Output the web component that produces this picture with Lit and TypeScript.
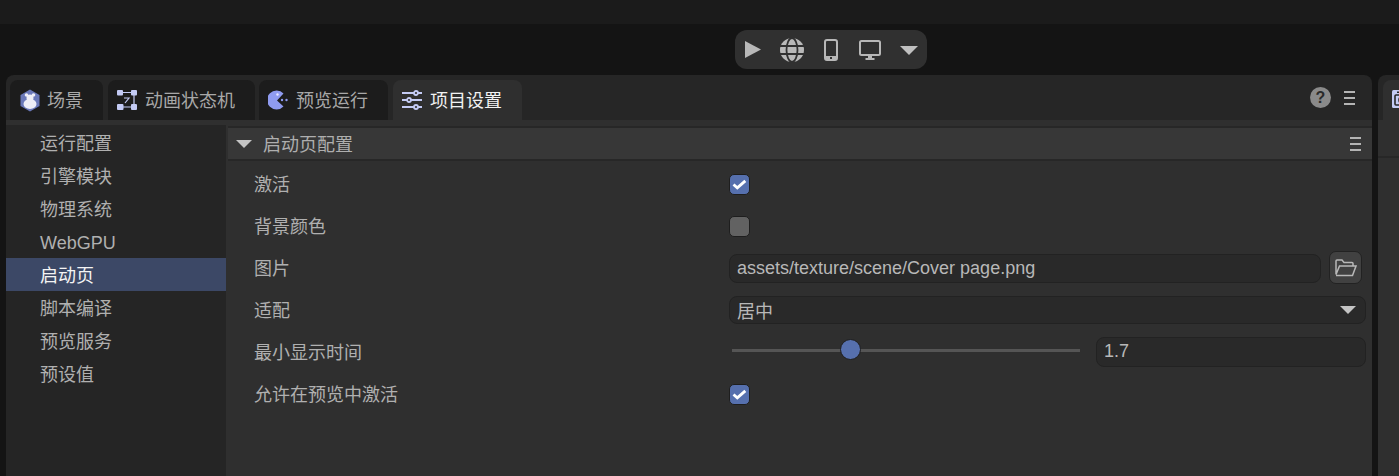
import { LitElement, html, css } from "lit";
import { customElement } from "lit/decorators.js";

const burger = html`<svg class="burger" width="11" height="14" viewBox="0 0 11 14"><path d="M0 1h11M0 7h11M0 13h11" stroke="#b4b4b4" stroke-width="2"/></svg>`;
const check = html`<svg width="19" height="19" viewBox="0 0 19 19"><path d="M3.500 9.500l3.800 3.400 8-7" fill="none" stroke="#fff" stroke-width="2.800"/></svg>`;
const caret = (w: number, h: number, c = "#c4c4c4") => html`<svg width="${w}" height="${h}" viewBox="0 0 ${w} ${h}"><path d="M0 0H${w}L${w / 2} ${h}Z" fill="${c}"/></svg>`;

const menu = ["运行配置", "引擎模块", "物理系统", "WebGPU", "启动页", "脚本编译", "预览服务", "预设值"];

@customElement("app-root")
export class AppRoot extends LitElement {
  static styles = css`
    :host { display: block; width: 1399px; height: 476px; overflow: hidden; background: #141414;
      font-family: "Liberation Sans", "Noto Sans CJK SC", sans-serif; font-size: 18px; color: #b4b4b4; }
    .topstrip { height: 24px; background: #1b1b1b; }
    .toolrow { height: 51px; display: flex; padding-left: 735px; box-sizing: border-box; padding-top: 6px; }
    .toolbar { width: 192px; height: 39px; border-radius: 12px; background: #303030; position: relative; }
    .toolbar svg { position: absolute; }
    .i-play { left: 10px; top: 11px; }
    .i-globe { left: 45px; top: 8px; }
    .i-phone { left: 89px; top: 9px; }
    .i-mon { left: 124px; top: 10px; }
    .i-caret { left: 165px; top: 16px; }
    .main { display: flex; gap: 6px; padding-left: 6px; height: 401px; }
    .panel { width: 1366px; background: #262626; border-radius: 8px 8px 0 0; display: flex; flex-direction: column; flex: none; }
    .tabs { height: 45px; box-sizing: border-box; padding: 5px 0 0 4px; display: flex; gap: 5px; align-items: stretch; position: relative; flex: none; }
    .tab { height: 40px; background: #1c1c1c; border-radius: 8px 8px 0 0; display: flex; align-items: center; box-sizing: border-box; color: #a8a8a8; padding-left: 9px; gap: 8px; flex: none; }
    .tab span { padding-bottom: 2px; }
    .tab.first { padding-left: 10px; gap: 7px; }
    .tab.snug { margin-left: -1px; }
    .tab.on { background: #2f2f2f; color: #f2f2f2; }
    .acts { position: absolute; right: 17px; top: 12px; display: flex; align-items: center; gap: 13px; }
    .help { width: 21px; height: 21px; border-radius: 50%; background: #8a8a8a; color: #2a2a2a; font-weight: 700; font-size: 16px; display: flex; align-items: center; justify-content: center; }
    .band { height: 5px; background: #2f2f2f; flex: none; }
    .body { flex: 1; display: flex; min-height: 0; }
    .side { width: 220px; flex: none; background: #252525; display: flex; flex-direction: column; padding-top: 1px; box-sizing: border-box; }
    .side div { height: 33px; line-height: 37px; padding-left: 34px; color: #b0b0b0; }
    .side div.on { background: #3c4866; color: #f4f4f4; }
    .content { flex: 1; background: #2f2f2f; padding: 1px 0 0 2px; box-sizing: border-box; }
    .hdr { height: 31px; background: #373737; border-top: 2px solid #272727; border-bottom: 2px solid #272727; display: flex; align-items: center; padding: 0 11px 0 8px; color: #aeaeae; }
    .hdr .t { margin-left: 11px; flex: 1; padding-bottom: 1px; }
    .rows { padding-top: 2px; }
    .row { height: 42px; display: flex; align-items: center; }
    .label { width: 501px; padding: 0 0 2px 26px; box-sizing: border-box; flex: none; color: #b0b0b0; }
    .cb { width: 21px; height: 21px; border-radius: 5px; border: 1px solid #1e1e1e; background: #5670ae; flex: none; display: flex; box-sizing: border-box; }
    .cb.off { background: #626262; }
    .field { height: 29px; border: 1px solid #222; background: #292929; border-radius: 8px; box-sizing: border-box; padding: 0 7px; display: flex; align-items: center; color: #b8b8b8; flex: none; }
    .f-img { width: 592px; }
    .f-sel { width: 637px; height: 28px; justify-content: space-between; padding-right: 9px; }
    .f-num { width: 270px; height: 30px; padding-bottom: 2px; }
    .fbtn { width: 33px; height: 33px; margin: 0 0 1px 8px; border: 1px solid #222; border-radius: 7px; background: #414141; display: flex; align-items: center; justify-content: center; box-sizing: border-box; }
    .slider { width: 348px; height: 3px; background: #555; position: relative; margin: 0 16px 3px 3px; flex: none; }
    .knob { position: absolute; left: 108px; top: -10px; width: 21px; height: 21px; border-radius: 50%; background: #5670ae; border: 1px solid #1e1e1e; box-sizing: border-box; }
    .right { flex: 1; background: #262626; border-radius: 8px 0 0 0; display: flex; flex-direction: column; min-width: 0; }
    .rtab { margin: 5px 0 0 5px; height: 40px; background: #2f2f2f; border-radius: 8px 0 0 0; padding: 10px 0 0 9px; box-sizing: border-box; overflow: hidden; flex: none; }
    .rbody { flex: 1; background: #2f2f2f; }
    .rline { height: 36px; border-bottom: 2px solid #272727; }
  `;

  render() {
    return html`
      <div class="topstrip"></div>
      <div class="toolrow">
        <div class="toolbar">
          <svg class="i-play" width="16" height="17" viewBox="0 0 16 17"><path d="M0 0L16 8.500L0 17Z" fill="#b8b8b8"/></svg>
          <svg class="i-globe" width="24" height="24" viewBox="0 0 24 24">
            <circle cx="12" cy="12" r="12" fill="#b8b8b8"/>
            <g fill="none" stroke="#303030" stroke-width="1.800"><path d="M0 8h24M0 16h24"/><ellipse cx="12" cy="12" rx="5.500" ry="12"/></g>
          </svg>
          <svg class="i-phone" width="14" height="22" viewBox="0 0 14 22">
            <rect x="1" y="1" width="12" height="20" rx="2" fill="none" stroke="#b8b8b8" stroke-width="2"/><path d="M1 17h12v3a1 1 0 0 1-1 1H2a1 1 0 0 1-1-1z" fill="#b8b8b8"/><rect x="6" y="18" width="2" height="2" fill="#303030"/>
          </svg>
          <svg class="i-mon" width="22" height="20" viewBox="0 0 22 20">
            <rect x="1" y="1" width="20" height="14" rx="1.500" fill="none" stroke="#b8b8b8" stroke-width="2"/><path d="M9 15h4v3h-4zM6.500 18h9v2h-9z" fill="#b8b8b8"/>
          </svg>
          <svg class="i-caret" width="18" height="9" viewBox="0 0 18 9"><path d="M0 0H18L9 9Z" fill="#c0c0c0"/></svg>
        </div>
      </div>
      <div class="main">
        <div class="panel">
          <div class="tabs">
            <div class="tab first" style="width:93px">
              <svg width="20" height="23" viewBox="0 0 20 23"><path d="M10 .5L19.500 6v11L10 22.500.5 17V6z" fill="#6a78b8"/><ellipse cx="10" cy="15" rx="6.500" ry="5" fill="#eeeef6"/><circle cx="10" cy="9" r="3.500" fill="#eeeef6"/><circle cx="6.500" cy="6" r="1.800" fill="#eeeef6"/><circle cx="13.500" cy="6" r="1.800" fill="#eeeef6"/></svg>
              <span>场景</span>
            </div>
            <div class="tab" style="width:147px">
              <svg width="20" height="20" viewBox="0 0 20 20"><g fill="#c4cbf5"><rect x="0" y="0" width="6" height="5.500" rx="1"/><rect x="14" y="0" width="6" height="5.500" rx="1"/><rect x="0" y="14" width="6.500" height="6" rx="1"/><rect x="14" y="14" width="6" height="6" rx="1"/></g><path d="M6 2.500h8M17 5v9M6 17h8M7 8h5l-4 5" fill="none" stroke="#c4cbf5" stroke-width="1.200"/></svg>
              <span>动画状态机</span>
            </div>
            <div class="tab snug" style="width:129px">
              <svg width="20" height="20" viewBox="0 0 20 20"><path d="M15.500 3.500A9.500 9.500 0 1 0 15.500 16.500L9 10.500Z" fill="#8f9bf0"/><circle cx="9.500" cy="4.500" r="1.200" fill="#e8e8ff"/><circle cx="14" cy="10" r="1.200" fill="#8f9bf0"/><circle cx="18.500" cy="10" r="1.200" fill="#8f9bf0"/></svg>
              <span>预览运行</span>
            </div>
            <div class="tab on" style="width:129px">
              <svg width="20" height="20" viewBox="0 0 20 20"><g fill="none" stroke="#c4cbf5" stroke-width="1.800"><path d="M0 3h12M16 3h4M0 10h5M9 10h11M0 17h12M16 17h4"/><circle cx="14" cy="3" r="2"/><circle cx="7" cy="10" r="2"/><circle cx="14" cy="17" r="2"/></g></svg>
              <span>项目设置</span>
            </div>
            <div class="acts"><span class="help">?</span>${burger}</div>
          </div>
          <div class="band"></div>
          <div class="body">
            <div class="side">${menu.map((m) => html`<div class=${m === "启动页" ? "on" : ""}>${m}</div>`)}</div>
            <div class="content">
              <div class="hdr">${caret(16, 8)}<span class="t">启动页配置</span>${burger}</div>
              <div class="rows">
                <div class="row"><span class="label">激活</span><span class="cb">${check}</span></div>
                <div class="row"><span class="label">背景颜色</span><span class="cb off"></span></div>
                <div class="row"><span class="label">图片</span><span class="field f-img">assets/texture/scene/Cover page.png</span>
                  <span class="fbtn"><svg width="22" height="18" viewBox="0 0 22 18"><path d="M1 15.500V2a1 1 0 0 1 1-1h5l2 2.500h8a1 1 0 0 1 1 1V7M1 15.500L4.500 7H21l-3.500 9.500H1" fill="none" stroke="#b8b8b8" stroke-width="1.500"/></svg></span></div>
                <div class="row"><span class="label">适配</span><span class="field f-sel">居中 ${caret(16, 8)}</span></div>
                <div class="row"><span class="label">最小显示时间</span><span class="slider"><span class="knob"></span></span><span class="field f-num">1.7</span></div>
                <div class="row"><span class="label">允许在预览中激活</span><span class="cb">${check}</span></div>
              </div>
            </div>
          </div>
        </div>
        <div class="right">
          <div class="rtab"><svg width="20" height="18" viewBox="0 0 20 18"><rect x="0" y="0" width="20" height="18" rx="1.500" fill="#c4cbf5"/><rect x="3" y="5" width="14" height="10" rx="1" fill="none" stroke="#262626" stroke-width="1.600"/><circle cx="10" cy="10" r="3" fill="none" stroke="#262626" stroke-width="1.600"/><rect x="5" y="1.500" width="3" height="1.500" fill="#262626"/></svg></div>
          <div class="rbody"><div class="rline"></div></div>
        </div>
      </div>
    `;
  }
}
